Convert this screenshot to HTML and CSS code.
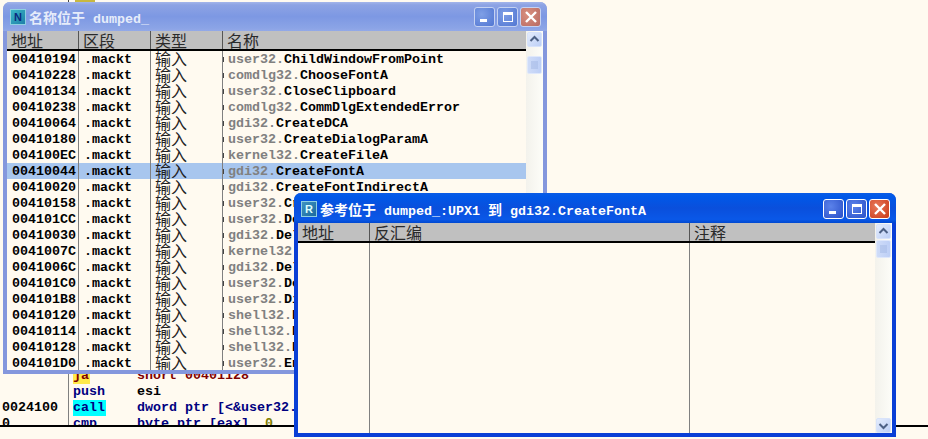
FILE: index.html
```html
<!DOCTYPE html>
<html lang="zh">
<head>
<meta charset="utf-8">
<title>dumped_</title>
<link rel="stylesheet" href="styles.css">
</head>
<body>
<div class="desk">
  <div class="topmark"></div>
  <div class="topline"></div>
  <div class="code">
    <div class="cl"><span class="ad"></span><span class="mn"><b class="hl-y red">ja</b></span><span class="red">short 00401128</span></div>
    <div class="cl"><span class="ad"></span><span class="mn navy">push</span><span class="blk">esi</span></div>
    <div class="cl"><span class="ad">0024100</span><span class="mn"><b class="hl-c navy">call</b></span><span class="navy">dword ptr [&lt;&amp;user32.</span></div>
    <div class="cl"><span class="ad">0</span><span class="mn navy">cmp</span><span class="navy">byte ptr [eax], <i class="olive">0</i></span></div>
  </div>
</div>

<section class="win win-names">
  <header class="tbar">
    <span class="ticon">N</span>
    <span class="ttext"><span class="cjk">名称位于</span> dumped_</span>
    <span class="btns">
      <span class="btn min"><svg viewBox="0 0 20 20" width="20" height="20"><rect x="5" y="12" width="7" height="3" fill="#fff"/></svg></span>
      <span class="btn max"><svg viewBox="0 0 20 20" width="20" height="20"><path d="M5 5h10v10H5z M6 8v6h8V8z" fill="#fff" fill-rule="evenodd"/></svg></span>
      <span class="btn cls"><svg viewBox="0 0 20 20" width="20" height="20"><path d="M5 5l10 10M15 5L5 15" stroke="#fff" stroke-width="2.4" fill="none"/></svg></span>
    </span>
  </header>
  <div class="client">
    <div class="pane">
      <div class="head hgrid">
        <span>地址</span><span>区段</span><span>类型</span><span>名称</span>
      </div>
      <div class="rows">
        <div class="row"><span>00410194</span><span>.mackt</span><span class="imp">输入</span><span class="nm"><i>user32.</i>ChildWindowFromPoint</span></div>
        <div class="row"><span>00410228</span><span>.mackt</span><span class="imp">输入</span><span class="nm"><i>comdlg32.</i>ChooseFontA</span></div>
        <div class="row"><span>00410134</span><span>.mackt</span><span class="imp">输入</span><span class="nm"><i>user32.</i>CloseClipboard</span></div>
        <div class="row"><span>00410238</span><span>.mackt</span><span class="imp">输入</span><span class="nm"><i>comdlg32.</i>CommDlgExtendedError</span></div>
        <div class="row"><span>00410064</span><span>.mackt</span><span class="imp">输入</span><span class="nm"><i>gdi32.</i>CreateDCA</span></div>
        <div class="row"><span>00410180</span><span>.mackt</span><span class="imp">输入</span><span class="nm"><i>user32.</i>CreateDialogParamA</span></div>
        <div class="row"><span>004100EC</span><span>.mackt</span><span class="imp">输入</span><span class="nm"><i>kernel32.</i>CreateFileA</span></div>
        <div class="row sel"><span>00410044</span><span>.mackt</span><span class="imp">输入</span><span class="nm"><i>gdi32.</i>CreateFontA</span></div>
        <div class="row"><span>00410020</span><span>.mackt</span><span class="imp">输入</span><span class="nm"><i>gdi32.</i>CreateFontIndirectA</span></div>
        <div class="row"><span>00410158</span><span>.mackt</span><span class="imp">输入</span><span class="nm"><i>user32.</i>CreateWindowExA</span></div>
        <div class="row"><span>004101CC</span><span>.mackt</span><span class="imp">输入</span><span class="nm"><i>user32.</i>DefWindowProcA</span></div>
        <div class="row"><span>00410030</span><span>.mackt</span><span class="imp">输入</span><span class="nm"><i>gdi32.</i>DeleteDC</span></div>
        <div class="row"><span>0041007C</span><span>.mackt</span><span class="imp">输入</span><span class="nm"><i>kernel32.</i>DeleteFileA</span></div>
        <div class="row"><span>0041006C</span><span>.mackt</span><span class="imp">输入</span><span class="nm"><i>gdi32.</i>DeleteObject</span></div>
        <div class="row"><span>004101C0</span><span>.mackt</span><span class="imp">输入</span><span class="nm"><i>user32.</i>DestroyWindow</span></div>
        <div class="row"><span>004101B8</span><span>.mackt</span><span class="imp">输入</span><span class="nm"><i>user32.</i>DialogBoxParamA</span></div>
        <div class="row"><span>00410120</span><span>.mackt</span><span class="imp">输入</span><span class="nm"><i>shell32.</i>DragAcceptFiles</span></div>
        <div class="row"><span>00410114</span><span>.mackt</span><span class="imp">输入</span><span class="nm"><i>shell32.</i>DragFinish</span></div>
        <div class="row"><span>00410128</span><span>.mackt</span><span class="imp">输入</span><span class="nm"><i>shell32.</i>DragQueryFileA</span></div>
        <div class="row"><span>004101D0</span><span>.mackt</span><span class="imp">输入</span><span class="nm"><i>user32.</i>EndDialog</span></div>
      </div>
    </div>
    <div class="sbar">
      <span class="sb up"><svg viewBox="0 0 15 15" width="15" height="15"><path d="M3.5 9l4-4 4 4" stroke="#4d6185" stroke-width="2" fill="none"/></svg></span>
      <span class="thumb t1"><svg viewBox="0 0 13 18" width="13" height="18"><path d="M3 6h7M3 8h7M3 10h7M3 12h7" stroke="#a3b8e4" stroke-width="1"/></svg></span>
    </div>
  </div>
</section>

<section class="win win-refs">
  <header class="tbar">
    <span class="ticon">R</span>
    <span class="ttext"><span class="cjk">参考位于</span> dumped_:UPX1 <span class="cjk">到</span> gdi32.CreateFontA</span>
    <span class="btns">
      <span class="btn min"><svg viewBox="0 0 20 20" width="20" height="20"><rect x="5" y="12" width="7" height="3" fill="#fff"/></svg></span>
      <span class="btn max"><svg viewBox="0 0 20 20" width="20" height="20"><path d="M5 5h10v10H5z M6 8v6h8V8z" fill="#fff" fill-rule="evenodd"/></svg></span>
      <span class="btn cls"><svg viewBox="0 0 20 20" width="20" height="20"><path d="M5 5l10 10M15 5L5 15" stroke="#fff" stroke-width="2.4" fill="none"/></svg></span>
    </span>
  </header>
  <div class="client">
    <div class="pane">
      <div class="head rgrid">
        <span>地址</span><span>反汇编</span><span>注释</span>
      </div>
      <div class="rbody rgrid"><span></span><span></span><span></span></div>
    </div>
    <div class="sbar">
      <span class="sb up"><svg viewBox="0 0 15 15" width="15" height="15"><path d="M3.5 9l4-4 4 4" stroke="#4d6185" stroke-width="2" fill="none"/></svg></span>
      <span class="thumb t2"><svg viewBox="0 0 13 18" width="13" height="18"><path d="M3 6h7M3 8h7M3 10h7M3 12h7" stroke="#a3b8e4" stroke-width="1"/></svg></span>
      <span class="sb down"><svg viewBox="0 0 15 15" width="15" height="15"><path d="M3.5 6l4 4 4-4" stroke="#4d6185" stroke-width="2" fill="none"/></svg></span>
    </div>
  </div>
</section>
</body>
</html>
```

FILE: styles.css
```css
* { box-sizing: border-box; }
html, body { margin: 0; height: 100%; overflow: hidden; background: #fffaf0; }
body { width: 928px; height: 439px; position: relative; font-family: "Liberation Mono", "DejaVu Sans Mono", monospace; font-weight: 700; font-size: 13.33px; color: #000; }
i { font-style: normal; }

.desk { width: 928px; height: 427px; display: flex; flex-direction: column; justify-content: flex-end; border-bottom: 2px solid #000; overflow: hidden; position: relative; }
.topmark { position: absolute; left: 75px; top: 0; width: 20px; height: 2px; background: #c8b840; }
.topline { position: absolute; left: 68px; top: 0; width: 1px; height: 2px; background: #444; }
.code { height: 58px; flex: none; margin-bottom: -1px; }
.cl { height: 16px; display: flex; line-height: 15px; white-space: nowrap; }
.ad { width: 69px; padding-left: 2px; border-right: 1px solid #808080; flex: none; }
.mn { width: 68px; padding-left: 4px; flex: none; }
.mn b { display: inline-block; height: 16px; padding: 0 1px 0 0; font-weight: 700; }
.hl-y { background: #ffe94a; }
.hl-c { background: #00ffff; }
.red { color: #800000; }
.navy { color: #000080; }
.blk { color: #000; }
.olive { color: #808000; }

.win { position: absolute; display: flex; flex-direction: column; border-radius: 7px 7px 0 0; padding: 0 4px 4px; }
.win-names { left: 3px; top: 2px; width: 544px; height: 372px; background: #8497dd; z-index: 1; }
.win-refs { left: 294px; top: 193px; width: 602px; height: 244px; background: #0a3fd6; z-index: 2; }

.tbar { height: 29px; flex: none; display: flex; align-items: center; margin: 0 -4px; padding: 1px 6px 0 7px; border-radius: 7px 7px 0 0; color: #e6ecfa; }
.win-names .tbar { background: linear-gradient(180deg, #a3b5ea 0, #8da3e4 10%, #7d98e3 50%, #8ba4e6 90%, #93a9e8 100%); }
.win-refs .tbar { height: 30px; background: linear-gradient(180deg, #0a5ce6 0, #0058e8 12%, #0a4fdc 50%, #0a58e8 88%, #0048d0 100%); color: #fff; }
.ticon { width: 16px; height: 16px; flex: none; margin-right: 3px; background: linear-gradient(135deg, #39b6c6, #1f7fa8); border: 1px solid #8fd0e0; color: #0a2a80; font: 700 11px/14px "Liberation Sans", sans-serif; text-align: center; }
.win-refs .ticon { color: #dff; background: linear-gradient(135deg, #3f93c0, #1c6aa0); }
.ttext { flex: 1; font-family: "Liberation Mono", monospace; font-size: 13.33px; white-space: pre; }
.cjk { font-family: "Noto Sans CJK SC", sans-serif; font-size: 14px; font-weight: 700; }
.btns { display: flex; gap: 2px; flex: none; }
.btn { width: 21px; height: 20px; border-radius: 3px; border: 1px solid #fff; display: flex; align-items: center; justify-content: center; }
.btn svg { margin: -1px; flex: none; }
.min, .max { background: radial-gradient(circle at 35% 35%, #5b82ea, #2a50c8); }
.cls { background: radial-gradient(circle at 35% 35%, #e8785a, #c93a18); }
.win-names .btn { border-color: #c5d2f2; }
.win-names .min, .win-names .max { background: radial-gradient(circle at 35% 35%, #7f9fe6, #5176d2); }
.win-names .cls { background: radial-gradient(circle at 35% 35%, #d9907f, #b86a62); }

.client { flex: 1; min-height: 0; display: flex; background: #fffaf0; }
.pane { flex: 1; min-width: 0; display: flex; flex-direction: column; overflow: hidden; }
.head { height: 20px; flex: none; background: #c0c0c0; border-bottom: 2px solid #000; font-family: "Noto Sans CJK SC", sans-serif; font-weight: 400; font-size: 16px; line-height: 18px; color: #2a2a2a; }
.head span { padding-left: 4px; border-right: 1px solid #555; overflow: hidden; white-space: nowrap; }
.head span:last-child { border-right: 0; }
.hgrid { display: grid; grid-template-columns: 72px 72px 72px 1fr; }
.rgrid { display: grid; grid-template-columns: 72px 320px 1fr; }
.rbody { flex: 1; }
.rbody span { border-right: 1px solid #808080; }
.rbody span:last-child { border-right: 0; }

.row { height: 16px; display: grid; grid-template-columns: 72px 72px 72px 1fr; line-height: 17px; white-space: nowrap; }
.row span { padding-left: 5px; border-right: 1px solid #808080; overflow: hidden; }
.row span:last-child { border-right: 0; }
.row .imp { font-family: "Noto Sans CJK SC", sans-serif; font-weight: 400; font-size: 16px; line-height: 15px; height: 16px; padding-left: 4px; overflow: visible; color: #222; }
.row .nm { position: relative; }
.row .nm::before { content: ""; position: absolute; left: 0; top: 6px; width: 1px; height: 5px; background: #444; }
.nm i { color: #808080; }
.sel { background: #a8c6ee; }

.sbar { width: 17px; flex: none; display: flex; flex-direction: column; padding: 1px 1px 0 1px; background: linear-gradient(90deg, #f3f2ec, #fdfdf8); }
.sb { height: 15px; flex: none; border-radius: 2px; background: linear-gradient(135deg, #e4ecfc, #bccff6); border: 1px solid #d8e3fa; display: flex; align-items: center; justify-content: center; }
.sb svg { flex: none; margin: -1px; }
.thumb { height: 18px; width: 15px; border-radius: 2px; background: linear-gradient(90deg, #cfdcf8, #bdcff6); border: 1px solid #dfe8fb; display: flex; align-items: center; justify-content: center; flex: none; }
.t1 { margin-top: 9px; }
.t2 { margin-top: 1px; }
.down { margin-top: auto; }
```
